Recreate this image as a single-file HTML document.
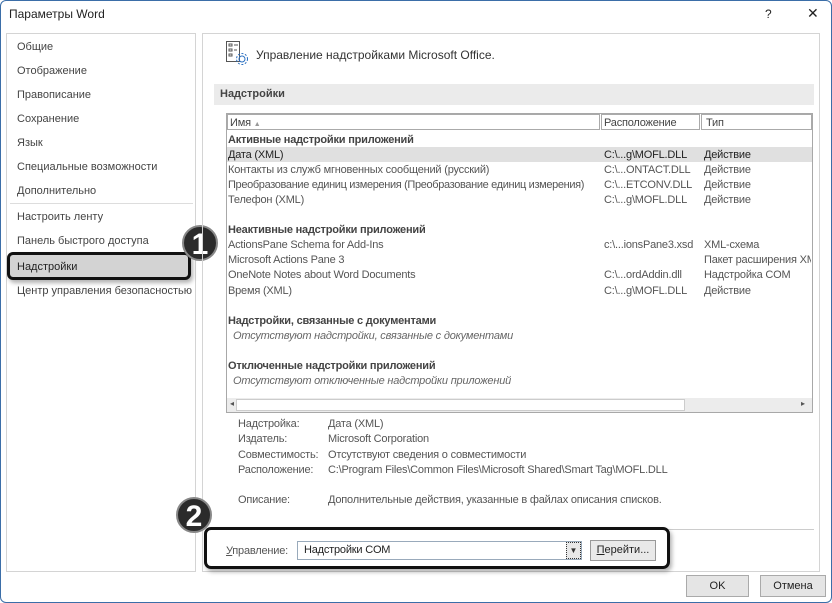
<!DOCTYPE html>
<html><head><meta charset="utf-8"><style>
*{box-sizing:border-box;margin:0;padding:0}
body{width:832px;height:603px;background:#fff;font-family:"Liberation Sans","Noto Sans CJK SC",sans-serif;font-size:11px;color:#333;position:relative;overflow:hidden}
.win{position:absolute;left:0;top:0;width:832px;height:603px;border:1px solid #3b6ea8;border-radius:6px}
.a{position:absolute;white-space:nowrap}
.pane{position:absolute;border:1px solid #d4d4d4}
.li{position:absolute;left:17px;font-size:11px;color:#444;white-space:nowrap;top:0}
.row{position:absolute;font-size:11px;color:#555;white-space:nowrap;letter-spacing:-0.2px}
.b{font-weight:bold;color:#444}
.i{font-style:italic;color:#666}
.badge{position:absolute;width:36px;height:36px;border-radius:50%;background:#2b2b2b;color:#fff;font-weight:bold;font-size:30px;text-align:center;line-height:36px;border:2px solid #888}
</style></head><body>
<div class="win"></div>
<div class="a" style="left:9px;top:7px;font-size:12px;color:#222">Параметры Word</div>
<div class="a" style="left:765px;top:7px;font-size:12px;color:#222">?</div>
<div class="a" style="left:807px;top:5px;font-size:14px;color:#222">✕</div>

<div class="pane" style="left:6px;top:33px;width:190px;height:539px"></div>
<div class="li" style="top:41px">Общие</div>
<div class="li" style="top:65px">Отображение</div>
<div class="li" style="top:89px">Правописание</div>
<div class="li" style="top:113px">Сохранение</div>
<div class="li" style="top:137px">Язык</div>
<div class="li" style="top:161px">Специальные возможности</div>
<div class="li" style="top:185px">Дополнительно</div>
<div class="a" style="left:10px;top:203px;width:183px;height:1px;background:#ddd"></div>
<div class="li" style="top:211px">Настроить ленту</div>
<div class="li" style="top:235px">Панель быстрого доступа</div>
<div class="a" style="left:7px;top:252px;width:184px;height:28px;background:#d3d3d3;border:3px solid #111;border-radius:6px;box-shadow:2px 3px 4px rgba(0,0,0,.3)"></div>
<div class="li" style="top:261px;color:#222">Надстройки</div>
<div class="li" style="top:285px">Центр управления безопасностью</div>
<div class="badge" style="left:182px;top:225px">1</div>

<div class="pane" style="left:202px;top:33px;width:618px;height:539px"></div>
<svg class="a" style="left:225px;top:40px" width="24" height="26" viewBox="0 0 24 26" fill="none" stroke="#555" stroke-width="1"><rect x="1.5" y="1.5" width="13" height="20"/><rect x="4" y="4" width="3" height="2"/><line x1="9" y1="5" x2="13" y2="5"/><rect x="4" y="9" width="3" height="2"/><line x1="9" y1="10" x2="12" y2="10"/><rect x="4" y="14" width="3" height="2"/><circle cx="17" cy="19" r="3" stroke="#2a6fc0"/><circle cx="17" cy="19" r="5.5" stroke="#2a6fc0" stroke-dasharray="2 1.6"/></svg>
<div class="a" style="left:256px;top:48px;font-size:12px;color:#333">Управление надстройками Microsoft Office.</div>
<div class="a" style="left:214px;top:84px;width:600px;height:21px;background:#ebebeb"></div>
<div class="a b" style="left:220px;top:88px">Надстройки</div>

<div class="a" style="left:226px;top:113px;width:587px;height:300px;border:1px solid #a8a8a8"></div>
<div class="a" style="left:227px;top:114px;width:373px;height:16px;border:1px solid #aaa"></div>
<div class="a" style="left:601px;top:114px;width:99px;height:16px;border:1px solid #aaa"></div>
<div class="a" style="left:701px;top:114px;width:111px;height:16px;border:1px solid #aaa"></div>
<div class="row" style="left:230px;top:117px;color:#444">Имя <span style="font-size:7px;color:#999">▲</span></div>
<div class="row" style="left:604px;top:117px;color:#444">Расположение</div>
<div class="row" style="left:706px;top:117px;color:#444">Тип</div>
<div class="row b" style="left:228px;top:134px">Активные надстройки приложений</div>
<div class="a" style="left:227px;top:147px;width:585px;height:15px;background:#e0e0e0"></div>
<div class="row" style="left:228px;top:149px;color:#222">Дата (XML)</div><div class="row" style="left:604px;top:149px;color:#222">C:\...g\MOFL.DLL</div><div class="row" style="left:704px;top:149px;color:#222">Действие</div>
<div class="row" style="left:228px;top:164px">Контакты из служб мгновенных сообщений (русский)</div><div class="row" style="left:604px;top:164px">C:\...ONTACT.DLL</div><div class="row" style="left:704px;top:164px">Действие</div>
<div class="row" style="left:228px;top:179px;letter-spacing:-0.35px">Преобразование единиц измерения (Преобразование единиц измерения)</div><div class="row" style="left:604px;top:179px">C:\...ETCONV.DLL</div><div class="row" style="left:704px;top:179px">Действие</div>
<div class="row" style="left:228px;top:194px">Телефон (XML)</div><div class="row" style="left:604px;top:194px">C:\...g\MOFL.DLL</div><div class="row" style="left:704px;top:194px">Действие</div>
<div class="row b" style="left:228px;top:224px">Неактивные надстройки приложений</div>
<div class="row" style="left:228px;top:239px">ActionsPane Schema for Add-Ins</div><div class="row" style="left:604px;top:239px">c:\...ionsPane3.xsd</div><div class="row" style="left:704px;top:239px">XML-схема</div>
<div class="row" style="left:228px;top:254px">Microsoft Actions Pane 3</div><div class="row" style="left:704px;top:254px;width:107px;overflow:hidden">Пакет расширения XML</div>
<div class="row" style="left:228px;top:269px">OneNote Notes about Word Documents</div><div class="row" style="left:604px;top:269px">C:\...ordAddin.dll</div><div class="row" style="left:704px;top:269px">Надстройка COM</div>
<div class="row" style="left:228px;top:285px">Время (XML)</div><div class="row" style="left:604px;top:285px">C:\...g\MOFL.DLL</div><div class="row" style="left:704px;top:285px">Действие</div>
<div class="row b" style="left:228px;top:315px">Надстройки, связанные с документами</div>
<div class="row i" style="left:233px;top:330px">Отсутствуют надстройки, связанные с документами</div>
<div class="row b" style="left:228px;top:360px">Отключенные надстройки приложений</div>
<div class="row i" style="left:233px;top:375px">Отсутствуют отключенные надстройки приложений</div>
<div class="a" style="left:227px;top:398px;width:585px;height:14px;background:#ececec"></div>
<div class="a" style="left:236px;top:399px;width:449px;height:12px;background:#fff;border:1px solid #ccc"></div>
<div class="a" style="left:230px;top:399px;font-size:8px;color:#555">◂</div>
<div class="a" style="left:801px;top:399px;font-size:8px;color:#555">▸</div>

<div class="row" style="left:238px;top:418px">Надстройка:</div><div class="row" style="left:328px;top:418px">Дата (XML)</div>
<div class="row" style="left:238px;top:433px">Издатель:</div><div class="row" style="left:328px;top:433px">Microsoft Corporation</div>
<div class="row" style="left:238px;top:449px">Совместимость:</div><div class="row" style="left:328px;top:449px">Отсутствуют сведения о совместимости</div>
<div class="row" style="left:238px;top:464px">Расположение:</div><div class="row" style="left:328px;top:464px">C:\Program Files\Common Files\Microsoft Shared\Smart Tag\MOFL.DLL</div>
<div class="row" style="left:238px;top:494px">Описание:</div><div class="row" style="left:328px;top:494px">Дополнительные действия, указанные в файлах описания списков.</div>
<div class="a" style="left:214px;top:529px;width:600px;height:1px;background:#ccc"></div>

<div class="a" style="left:204px;top:527px;width:466px;height:42px;border:3px solid #111;border-radius:7px;box-shadow:2px 3px 4px rgba(0,0,0,.3)"></div>
<div class="row" style="left:226px;top:545px"><u>У</u>правление:</div>
<div class="a" style="left:297px;top:541px;width:285px;height:19px;border:1px solid #9ab;background:#fff"></div>
<div class="row" style="left:304px;top:544px;color:#222">Надстройки COM</div>
<div class="a" style="left:566px;top:542px;width:15px;height:17px;border:1px dotted #333;background:#e8e8e8;font-size:8px;text-align:center;line-height:16px">▼</div>
<div class="a" style="left:590px;top:540px;width:66px;height:21px;border:1px solid #999;background:#e9e9e9;text-align:center;line-height:19px;color:#222"><u>П</u>ерейти...</div>
<div class="badge" style="left:176px;top:497px">2</div>

<div class="a" style="left:686px;top:575px;width:63px;height:22px;border:1px solid #aaa;background:#e5e5e5;text-align:center;line-height:20px;color:#222">OK</div>
<div class="a" style="left:760px;top:575px;width:66px;height:22px;border:1px solid #aaa;background:#e5e5e5;text-align:center;line-height:20px;color:#222">Отмена</div>
</body></html>
